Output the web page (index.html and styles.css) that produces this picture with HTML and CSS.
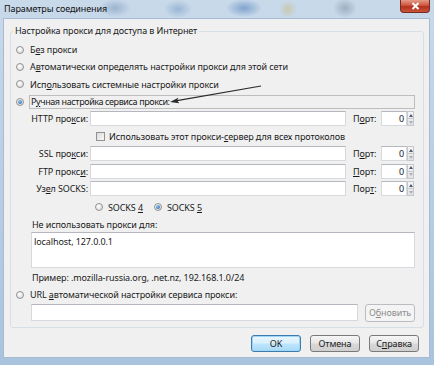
FILE: index.html
```html
<!DOCTYPE html>
<html lang="ru">
<head>
    <meta charset="UTF-8">
    <title>Параметры соединения</title>
    <link rel="stylesheet" href="styles.css">
</head>
<body>
<div class="window">
    <div class="titlebar">
        <span class="title">Параметры соединения</span>
        <span class="close">
            <svg width="9" height="8" viewBox="0 0 9 8"><path d="M1.5 1 L7.5 7 M7.5 1 L1.5 7" stroke="#fff" stroke-width="2"/></svg>
        </span>
    </div>

    <div class="client">
        <fieldset class="group">
            <legend>Настройка прокси для доступа в Интернет</legend>

            <div class="row opt"><span class="radio"></span><span>Б<u>е</u>з прокси</span></div>
            <div class="row opt"><span class="radio"></span><span>А<u>в</u>томатически определять настройки прокси для этой сети</span></div>
            <div class="row opt"><span class="radio"></span><span>Исп<u>о</u>льзовать системные настройки прокси</span></div>
            <div class="row opt"><span class="radio on"></span><span class="caption">Р<u>у</u>чная настройка сервиса прокси:</span></div>

            <div class="row field">
                <label class="field-label">HTTP про<u>к</u>си:</label>
                <span class="input host"></span>
                <label class="port-label">П<u>о</u>рт:</label>
                <span class="input port">0</span><span class="spin"><i class="up"></i><i class="down"></i></span>
            </div>
            <div class="row field">
                <span class="check"></span>
                <span>Использовать этот прокси-<u>с</u>ервер для всех протоколов</span>
            </div>
            <div class="row field">
                <label class="field-label">SSL про<u>к</u>си:</label>
                <span class="input host"></span>
                <label class="port-label">П<u>о</u>рт:</label>
                <span class="input port">0</span><span class="spin"><i class="up"></i><i class="down"></i></span>
            </div>
            <div class="row field">
                <label class="field-label">FTP прокс<u>и</u>:</label>
                <span class="input host"></span>
                <label class="port-label"><u>П</u>орт:</label>
                <span class="input port">0</span><span class="spin"><i class="up"></i><i class="down"></i></span>
            </div>
            <div class="row field">
                <label class="field-label">Уз<u>е</u>л SOCKS:</label>
                <span class="input host"></span>
                <label class="port-label">Пор<u>т</u>:</label>
                <span class="input port">0</span><span class="spin"><i class="up"></i><i class="down"></i></span>
            </div>

            <div class="row version">
                <span class="radio"></span><span>SOCKS <u>4</u></span>
                <span class="radio on second"></span><span>SOCKS <u>5</u></span>
            </div>

            <div class="row note">Не использовать прокси для:</div>
            <div class="textarea">localhost, 127.0.0.1</div>
            <div class="row example">Пример: .mozilla-russia.org, .net.nz, 192.168.1.0/24</div>

            <div class="row opt url"><span class="radio"></span><span>URL <u>а</u>втоматической настройки сервиса прокси:</span></div>
            <div class="row url-row">
                <span class="input url-input"></span>
                <span class="btn disabled">О<u>б</u>новить</span>
            </div>
        </fieldset>

        <div class="buttons">
            <span class="btn default">OK</span>
            <span class="btn">Отмена</span>
            <span class="btn">С<u>п</u>равка</span>
        </div>
    </div>

    <!-- стрелка поверх диалога -->
    <svg class="arrow" width="100" height="25" viewBox="0 0 100 25">
        <line x1="12" y1="18.6" x2="96" y2="4" stroke="#2b2b2b" stroke-width="1.2"/>
        <polygon points="5,20 14.3,21.2 12.2,18.6 13.3,15.8" fill="#2b2b2b"/>
    </svg>
</div>
</body>
</html>
```

FILE: styles.css
```css
* {
    box-sizing: border-box;
}

body {
    margin: 0;
    font-family: "Noto Sans", "DejaVu Sans", sans-serif;
    font-size: 9px;
    letter-spacing: -0.1px;
    color: #1a1a1a;
    background: #b9cfe5;
}

.window {
    position: relative;
    width: 434px;
    height: 365px;
    display: flex;
    flex-direction: column;
    padding: 0 4px 7px 3px;
    background:
        radial-gradient(ellipse 16px 9px at 115px 8px, rgba(120, 150, 185, 0.55), transparent),
        radial-gradient(ellipse 14px 9px at 178px 9px, rgba(110, 150, 190, 0.5), transparent),
        radial-gradient(ellipse 18px 9px at 244px 8px, rgba(70, 120, 180, 0.55), transparent),
        radial-gradient(ellipse 9px 9px at 288px 9px, rgba(200, 190, 140, 0.6), transparent),
        radial-gradient(ellipse 12px 10px at 345px 8px, rgba(120, 135, 155, 0.5), transparent),
        linear-gradient(#c8d9ea, #b5cce3 60%, #a9c3de);
}

.titlebar {
    height: 18px;
    display: flex;
    align-items: flex-start;
}

.title {
    padding: 3px 0 0 1px;
    line-height: 12px;
    color: #111;
}

.close {
    margin-left: auto;
    width: 30px;
    height: 13px;
    display: flex;
    align-items: center;
    justify-content: center;
    border: 1px solid #7a2a20;
    border-top: none;
    border-radius: 0 0 4px 4px;
    background: linear-gradient(#e49a86, #cf553d 45%, #b2321d 55%, #c9553a);
}

.client {
    flex: 1;
    background: #f0f0f0;
    border: 1px solid #a7bcd2;
    padding: 5px 5px 0 6px;
}

.group {
    margin: 0;
    padding: 3px 4px 4px 4px;
    border: 1px solid #d5dfe5;
    border-radius: 3px;
}

.group legend {
    padding: 0 2px;
    margin-left: -2px;
    line-height: 14px;
}

.row {
    display: flex;
    align-items: center;
    white-space: nowrap;
}

.opt {
    height: 17.3px;
}

.radio {
    flex: none;
    width: 8px;
    height: 8px;
    margin: 0 6px 0 1px;
    border: 1px solid #929292;
    border-radius: 50%;
    background: radial-gradient(circle at 40% 35%, #ffffff, #d4d4d4);
    display: flex;
    align-items: center;
    justify-content: center;
}

.radio.on::after {
    content: "";
    width: 4px;
    height: 4px;
    border-radius: 50%;
    background: radial-gradient(circle at 40% 35%, #8fc1ef, #1d5aa6);
}

.caption {
    width: 386px;
    height: 14px;
    margin-left: -1px;
    padding-left: 1px;
    border: 1px solid #bdbdbd;
    line-height: 12px;
    letter-spacing: -0.4px;
}

.field {
    height: 17.5px;
}

.field-label {
    width: 73px;
    text-align: right;
    margin-right: 2px;
}

.input {
    height: 15px;
    background: #fff;
    border: 1px solid #d6d9dd;
    border-top-color: #b4b8be;
}

.host {
    width: 256px;
}

.port-label {
    width: 28px;
    margin-left: 7px;
}

.port {
    width: 26px;
    text-align: right;
    padding-right: 2px;
    line-height: 13px;
}

.spin {
    width: 7px;
    height: 15px;
    display: flex;
    flex-direction: column;
    border: 1px solid #c4c7cc;
    background: linear-gradient(#f6f6f6, #e2e2e2);
}

.spin i {
    flex: 1;
    display: flex;
    align-items: center;
    justify-content: center;
}

.spin .up::after {
    content: "";
    border: 2px solid transparent;
    border-bottom: 3px solid #4b5a75;
    border-top: none;
}

.spin .down {
    border-top: 1px solid #c4c7cc;
}

.spin .down::after {
    content: "";
    border: 2px solid transparent;
    border-top: 3px solid #a9b0bd;
    border-bottom: none;
}

.check {
    width: 9px;
    height: 9px;
    margin: 0 4px 0 81px;
    border: 1px solid #929292;
    background: linear-gradient(135deg, #dcdcdc, #f8f8f8);
}

.version {
    height: 19px;
}

.version .radio {
    margin: 0 5px 0 80px;
}

.version .radio.second {
    margin-left: 11px;
}

.note {
    height: 15px;
    padding-left: 17px;
}

.textarea {
    width: 384px;
    height: 36px;
    margin-left: 16px;
    padding: 3px 2px;
    background: #fff;
    border: 1px solid #d6d9dd;
    border-top-color: #b4b8be;
    line-height: 11px;
}

.example {
    height: 19px;
    padding-left: 17px;
}

.url {
    height: 16px;
}

.url-row {
    height: 20px;
    padding-left: 16px;
}

.url-input {
    width: 327px;
    height: 17px;
}

.btn {
    display: flex;
    align-items: center;
    justify-content: center;
    width: 50px;
    height: 17px;
    border: 1px solid #7a7a7a;
    border-radius: 3px;
    background: linear-gradient(#f6f6f6, #e6e6e6 48%, #d8d8d8 52%, #cfcfcf);
}

.btn.disabled {
    margin-left: 7px;
    height: 18px;
    border-color: #b9bdc1;
    background: #f4f4f4;
    color: #8d8d8d;
}

.btn.default {
    border-color: #3d7bad;
    box-shadow: inset 0 0 0 1px #9fd5f6;
    background: linear-gradient(#eaf6fd, #d9f0fc 48%, #bee6fd 52%, #a7d9f5);
}

.buttons {
    display: flex;
    justify-content: flex-end;
    gap: 9px;
    margin-top: 7px;
    padding-right: 5px;
}

.arrow {
    position: absolute;
    left: 165px;
    top: 82px;
}
```
